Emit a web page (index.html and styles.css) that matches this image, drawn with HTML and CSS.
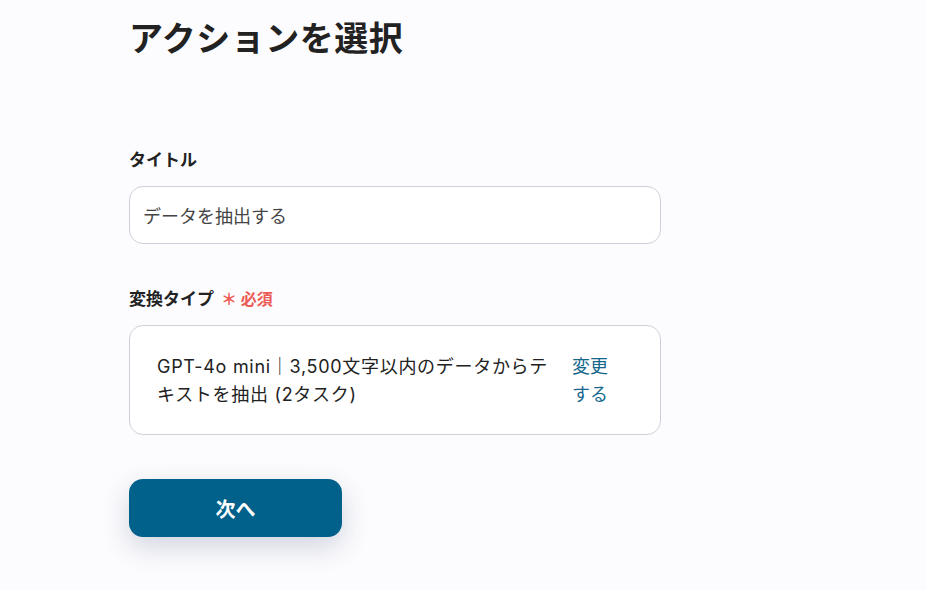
FILE: index.html
```html
<!DOCTYPE html>
<html lang="ja">
<head>
    <meta charset="UTF-8">
    <meta name="viewport" content="width=device-width, initial-scale=1.0">
    <link rel="stylesheet" href="styles.css">
</head>
<body>
    <div class="container">
        <h1>アクションを選択</h1>

        <div class="field">
            <label class="label">タイトル</label>
            <div class="input">データを抽出する</div>
        </div>

        <div class="field">
            <label class="label">変換タイプ <span class="required">＊ 必須</span></label>
            <div class="select-box">
                <p class="select-text">GPT-4o mini｜3,500文字以内のデータからテキストを抽出 (2タスク)</p>
                <a class="change-link">変更する</a>
            </div>
        </div>

        <button class="next-btn">次へ</button>
    </div>
</body>
</html>
```

FILE: styles.css
```css
html {
    background-color: #fcfcfe;
}
body {
    margin: 0;
    min-height: 590px;
    background-color: #fcfcfe;
    font-family: Inter, "Noto Sans CJK JP", sans-serif;
    color: #222;
}
.container {
    width: 532px;
    padding: 16px 0 0 129px;
}
h1 {
    margin: 0;
    font-size: 34px;
    font-weight: 700;
    line-height: 46px;
    letter-spacing: 0.5px;
    color: #222;
}
.label {
    display: block;
    font-size: 17px;
    font-weight: 700;
    line-height: 24px;
    margin: 86px 0 14px;
}
.field + .field .label {
    margin-top: 43px;
}
.required {
    color: #ec5b55;
    font-size: 16px;
    margin-left: 3px;
}
.input {
    height: 56px;
    border: 1px solid #cfd0dc;
    border-radius: 14px;
    background: #fff;
    padding: 0 13px;
    display: flex;
    align-items: center;
    font-size: 18px;
    color: #444;
}
.select-box {
    height: 107px;
    border: 1px solid #cfd0dc;
    border-radius: 14px;
    background: #fff;
    padding: 1px 50px 0 27px;
    display: flex;
    align-items: center;
    gap: 24px;
}
.select-text {
    flex: 1;
    margin: 0;
    font-size: 18px;
    line-height: 28px;
    letter-spacing: 0.7px;
    color: #222;
}
.change-link {
    flex: 0 0 38px;
    font-size: 18px;
    line-height: 28px;
    color: #14678c;
    cursor: pointer;
}
.next-btn {
    display: block;
    margin-top: 44px;
    width: 213px;
    height: 58px;
    border: none;
    border-radius: 14px;
    background-color: #02618a;
    color: #fff;
    font-family: inherit;
    font-size: 20px;
    font-weight: 700;
    box-shadow: 0 10px 28px rgba(40, 50, 100, 0.2);
    cursor: pointer;
}
```
